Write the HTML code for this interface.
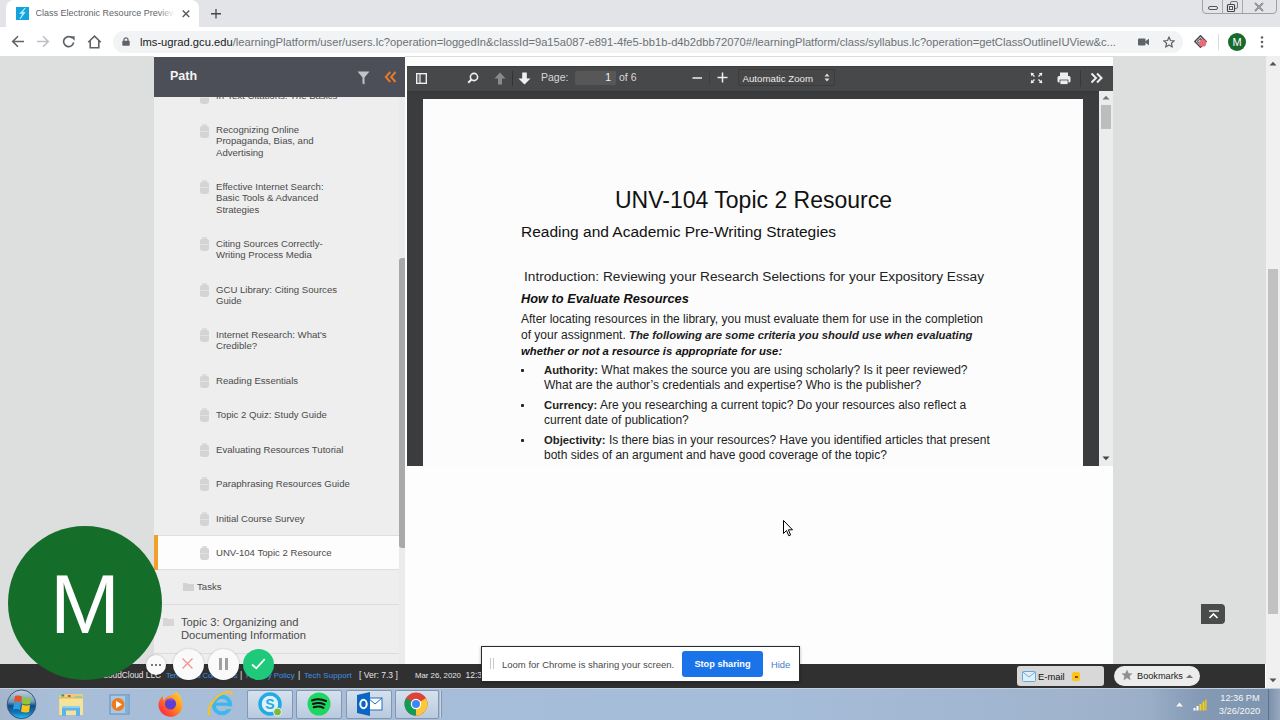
<!DOCTYPE html>
<html><head><meta charset="utf-8">
<style>
*{box-sizing:border-box;margin:0;padding:0}
html,body{width:1280px;height:720px;overflow:hidden;background:#fff;font-family:"Liberation Sans",sans-serif}
.a{position:absolute}
.nw{white-space:nowrap}
#tabbar{left:0;top:0;width:1280px;height:27px;background:#e3e4e8}
#tab{left:6px;top:0;width:193px;height:28px;background:#fff;border-radius:8px 8px 0 0}
#toolbar{left:0;top:27px;width:1280px;height:29px;background:#fff}
#pill{left:113px;top:31px;width:1070px;height:22px;background:#f1f3f4;border-radius:11px}
#url{left:140px;top:35px;font-size:11.2px;color:#202124;line-height:15px}
#url span{color:#6d7175}
#leftgray{left:0;top:56px;width:154px;height:608px;background:#dcdfde}
#pathhdr{left:154px;top:57px;width:251.5px;height:40px;background:#4c4e58}
#pathlist{left:154px;top:97px;width:245px;height:567px;background:#eeeeee;overflow:hidden}
#sbar{left:399px;top:97px;width:7.5px;height:567px;background:#ebebeb}
#sthumb{left:399px;top:258px;width:7.5px;height:290px;background:#a9a9a9;border-radius:3px}
#midwhite{left:405px;top:56px;width:708px;height:608px;background:#fdfdfd}
#pdf{left:406.5px;top:66px;width:706.5px;height:399.5px;background:#3b3c3e}
#pdftb{left:406.5px;top:66px;width:706.5px;height:24.5px;background:#474849;border-top:1px solid #3c3d3e}
#page{left:422.5px;top:99px;width:660.5px;height:366.5px;background:#fcfcfc}
#rightgray{left:1113px;top:56px;width:153px;height:608px;background:#dcdfde}
#oscroll{left:1266px;top:56px;width:14px;height:632px;background:#f0f0f0}
#footer{left:0;top:664px;width:1265px;height:24px;background:#303030}
#taskbar{left:0;top:688px;width:1280px;height:32px;background:linear-gradient(90deg,#a5b6cc 0%,#a7bdd8 4%,#a6bdd9 60%,#9fb3cc 85%,#8ea3bd 100%)}
.item{position:absolute;left:216px;font-size:9.6px;line-height:11.3px;color:#4b4b4b;white-space:nowrap}
.ico{position:absolute;left:200px;width:8.5px;height:12px;margin-top:2px;background:#d4d4d4;border-radius:2px 2px 3px 3px}.ico::before{content:"";position:absolute;left:2px;top:-2px;width:4.5px;height:2px;background:#dcdcdc;border-radius:1px 1px 0 0}.ico::after{content:"";position:absolute;left:0;top:5px;width:8.5px;height:1px;background:#e2e2e2}
.pdft{position:absolute;color:#111;white-space:nowrap}
</style></head><body>
<div id="tabbar" class="a"></div>
<div id="tab" class="a"></div>
<div id="toolbar" class="a"></div>
<div id="pill" class="a"></div>
<div id="url" class="a nw">lms-ugrad.gcu.edu<span>/learningPlatform/user/users.lc?operation=loggedIn&amp;classId=9a15a087-e891-4fe5-bb1b-d4b2dbb72070#/learningPlatform/class/syllabus.lc?operation=getClassOutlineIUView&amp;c...</span></div>

<!-- tab contents -->
<div class="a" style="left:16px;top:7px;width:13px;height:13px;background:#16a2dc"></div>
<svg class="a" style="left:16px;top:7px" width="13" height="13" viewBox="0 0 13 13"><path d="M9.2 1L3.8 6.6L6.8 6.6L4 12L9 5.4L6.2 5.4Z" fill="#c9faff" stroke="#b0f4ff" stroke-width="0.7" stroke-linejoin="round"/></svg>
<div class="a nw" style="left:35.6px;top:7px;font-size:9px;line-height:13px;color:#5f6368;width:150px;overflow:hidden"><span id="tt">Class Electronic Resource</span> Preview</div>
<div class="a" style="left:158px;top:4px;width:22px;height:20px;background:linear-gradient(90deg,rgba(255,255,255,0),#fff 75%)"></div>
<svg class="a" style="left:181.5px;top:10px" width="8" height="7.5" viewBox="0 0 8 7.5"><path d="M0.7 0.5L7.3 7M7.3 0.5L0.7 7" stroke="#555a5e" stroke-width="1.35"/></svg>
<svg class="a" style="left:211px;top:9px" width="10" height="9.5" viewBox="0 0 10 9.5"><path d="M5 0V9.5M0 4.75H10" stroke="#45484b" stroke-width="1.3"/></svg>
<!-- window controls -->
<div class="a" style="left:1202px;top:-3px;width:75px;height:17px;border:1px solid #a0a0a0;border-radius:0 0 4px 4px"></div>
<div class="a" style="left:1222px;top:0;width:1px;height:13px;background:#a8a8a8"></div>
<div class="a" style="left:1242px;top:0;width:1px;height:13px;background:#a8a8a8"></div>
<div class="a" style="left:1208px;top:6px;width:10px;height:4px;border:1px solid #555;border-radius:2px"></div>
<svg class="a" style="left:1226px;top:1px" width="13" height="12" viewBox="0 0 13 12"><rect x="4.5" y="0.5" width="7" height="7" rx="1.5" fill="none" stroke="#777"/><rect x="1.5" y="3.5" width="7" height="7" rx="1" fill="#eee" stroke="#444" stroke-width="1.2"/><rect x="3.5" y="5.5" width="3" height="3" fill="none" stroke="#555"/></svg>
<svg class="a" style="left:1254px;top:2px" width="10" height="10" viewBox="0 0 10 10"><path d="M1 1L9 9M9 1L1 9" stroke="#555" stroke-width="1.6"/><path d="M1 1L9 9M9 1L1 9" stroke="#eee" stroke-width="0.5"/></svg>
<!-- nav icons -->
<svg class="a" style="left:11px;top:35px" width="14" height="13" viewBox="0 0 14 13"><path d="M13 6.5H2M7 1.2L1.7 6.5L7 11.8" stroke="#5f6368" stroke-width="1.6" fill="none"/></svg>
<svg class="a" style="left:36px;top:35px" width="14" height="13" viewBox="0 0 14 13"><path d="M1 6.5H12M7 1.2L12.3 6.5L7 11.8" stroke="#bdc1c6" stroke-width="1.6" fill="none"/></svg>
<svg class="a" style="left:62px;top:35px" width="14" height="13" viewBox="0 0 14 13"><path d="M11.6 7.3A5 5 0 1 1 10 2.9" stroke="#5f6368" stroke-width="1.7" fill="none"/><path d="M8 1.2H12.6V5.8Z" fill="#5f6368"/></svg>
<svg class="a" style="left:87px;top:35px" width="15" height="14" viewBox="0 0 15 14"><path d="M1.2 7.3L7.5 1.2L13.8 7.3M3.2 5.8V12.8H11.8V5.8" stroke="#5f6368" stroke-width="1.6" fill="none"/></svg>
<!-- lock -->
<svg class="a" style="left:122px;top:37px" width="8" height="9" viewBox="0 0 8 9"><rect x="0.3" y="3.8" width="7.4" height="5" rx="0.8" fill="#5f6368"/><path d="M2 4V2.8A2 2 0 0 1 6 2.8V4" stroke="#5f6368" stroke-width="1.2" fill="none"/></svg>
<!-- camera, star -->
<svg class="a" style="left:1138px;top:38px" width="11" height="8" viewBox="0 0 11 8"><rect x="0" y="0.5" width="7.5" height="7" rx="1" fill="#5f6368"/><path d="M7 3.5L11 0.8V7.2L7 4.5Z" fill="#5f6368"/></svg>
<svg class="a" style="left:1163px;top:36px" width="12" height="12" viewBox="0 0 13 13"><path d="M6.5 1L8.1 4.9L12.3 5.2L9.1 7.9L10.1 12L6.5 9.8L2.9 12L3.9 7.9L0.7 5.2L4.9 4.9Z" stroke="#5f6368" stroke-width="1.3" fill="none" stroke-linejoin="round"/></svg>
<!-- loom ext icon -->
<svg class="a" style="left:1194px;top:35px" width="13" height="13" viewBox="0 0 13 13"><path d="M6.5 0.8L12.2 6.5L6.5 12.2L0.8 6.5Z" fill="none" stroke="#4a4a4a" stroke-width="1.5" stroke-linejoin="round"/><path d="M6.5 3.3L9.7 6.5L6.5 9.7L3.3 6.5Z" fill="none" stroke="#666" stroke-width="1.2" stroke-linejoin="round"/><circle cx="8.6" cy="8.2" r="3.6" fill="#ec6a7a"/></svg>
<div class="a" style="left:1218px;top:34px;width:1px;height:16px;background:#dadce0"></div>
<div class="a" style="left:1228px;top:33px;width:18px;height:18px;border-radius:50%;background:#176a2b;color:#fff;font-size:11px;line-height:18px;text-align:center">M</div>
<svg class="a" style="left:1260px;top:35px" width="4" height="14" viewBox="0 0 4 14"><circle cx="2" cy="2.5" r="1.3" fill="#5f6368"/><circle cx="2" cy="7" r="1.3" fill="#5f6368"/><circle cx="2" cy="11.5" r="1.3" fill="#5f6368"/></svg>

<div id="leftgray" class="a"></div>
<div id="pathhdr" class="a"></div>
<div id="pathlist" class="a"></div>

<!-- path header -->
<!-- list items -->
<div class="ico" style="top:90px"></div><div class="item" style="top:90px">In-Text Citations: The Basics</div>
<div class="a" style="left:154px;top:57px;width:251.5px;height:40px;background:#4c4e58"></div>
<div class="a nw" style="left:170px;top:69px;font-size:12.5px;font-weight:bold;color:#f4f4f4;line-height:14px">Path</div>
<svg class="a" style="left:356.5px;top:70.5px" width="13" height="14" viewBox="0 0 13 14"><path d="M0.5 0.5H12.5L7.5 6.5V13.5L5.5 12.5V6.5Z" fill="#c2c3c7"/></svg>
<svg class="a" style="left:383.5px;top:71px" width="13" height="12" viewBox="0 0 13 12"><path d="M6.2 1L1.8 6L6.2 11M11.5 1L7.1 6L11.5 11" stroke="#ea7a26" stroke-width="1.9" fill="none"/></svg>
<div class="ico" style="top:124px"></div><div class="item" style="top:124px">Recognizing Online<br>Propaganda, Bias, and<br>Advertising</div>
<div class="ico" style="top:180px"></div><div class="item" style="top:181px">Effective Internet Search:<br>Basic Tools &amp; Advanced<br>Strategies</div>
<div class="ico" style="top:237px"></div><div class="item" style="top:238px">Citing Sources Correctly-<br>Writing Process Media</div>
<div class="ico" style="top:283px"></div><div class="item" style="top:284px">GCU Library: Citing Sources<br>Guide</div>
<div class="ico" style="top:328px"></div><div class="item" style="top:329px">Internet Research: What's<br>Credible?</div>
<div class="ico" style="top:374px"></div><div class="item" style="top:375px">Reading Essentials</div>
<div class="ico" style="top:408px"></div><div class="item" style="top:409px">Topic 2 Quiz: Study Guide</div>
<div class="ico" style="top:443px"></div><div class="item" style="top:444px">Evaluating Resources Tutorial</div>
<div class="ico" style="top:477px"></div><div class="item" style="top:478px">Paraphrasing Resources Guide</div>
<div class="ico" style="top:512px"></div><div class="item" style="top:513px">Initial Course Survey</div>
<div class="a" style="left:154px;top:535px;width:245px;height:35px;background:#fdfdfd;border-top:1px solid #dedede;border-bottom:1px solid #dedede"></div>
<div class="a" style="left:154px;top:535px;width:4px;height:35px;background:#f0a02a"></div>
<div class="ico" style="top:546px"></div><div class="item" style="top:547px">UNV-104 Topic 2 Resource</div>
<svg class="a" style="left:183px;top:582px" width="11" height="9" viewBox="0 0 11 9"><path d="M0 1H4L5 2H11V9H0Z" fill="#d2d2d2"/></svg>
<div class="item" style="left:197px;top:581px">Tasks</div>
<div class="a" style="left:154px;top:604px;width:245px;height:1px;background:#dcdcdc"></div>
<svg class="a" style="left:163px;top:617px" width="11" height="9" viewBox="0 0 11 9"><path d="M0 1H4L5 2H11V9H0Z" fill="#d6d6d6"/></svg>
<div class="item" style="left:181px;top:616px;font-size:11.2px;line-height:13px">Topic 3: Organizing and<br>Documenting Information</div>
<div class="a" style="left:154px;top:653px;width:245px;height:1px;background:#dcdcdc"></div>
<div id="sbar" class="a"></div>
<div id="sthumb" class="a"></div>
<div id="midwhite" class="a"></div>
<div id="pdf" class="a"></div>
<div id="pdftb" class="a"></div>

<!-- pdf toolbar -->
<div class="a" style="left:406.5px;top:91px;width:706.5px;height:3px;background:linear-gradient(#353638,#3b3c3e)"></div>
<svg class="a" style="left:416px;top:73px" width="11" height="11" viewBox="0 0 11 11"><rect x="0.7" y="0.7" width="9.6" height="9.6" fill="none" stroke="#eee" stroke-width="1.4"/><path d="M4 1V10" stroke="#eee" stroke-width="1.2"/><path d="M2 2.5V8.5" stroke="#999" stroke-width="1"/></svg>
<svg class="a" style="left:467px;top:72px" width="12" height="12" viewBox="0 0 12 12"><circle cx="7" cy="5" r="3.6" fill="none" stroke="#eee" stroke-width="1.6"/><path d="M4.5 7.5L1.2 10.8" stroke="#eee" stroke-width="2"/></svg>
<svg class="a" style="left:494px;top:72px" width="12" height="13" viewBox="0 0 12 13"><path d="M6 0.5L11.5 6.5H8V12.5H4V6.5H0.5Z" fill="#8a8a8a"/></svg>
<div class="a" style="left:512px;top:71px;width:1px;height:15px;background:#333"></div>
<svg class="a" style="left:518px;top:72px" width="13" height="13" viewBox="0 0 13 13"><path d="M6.5 12.5L12.5 6.5H8.8V0.5H4.2V6.5H0.5Z" fill="#f0f0f0"/></svg>
<div class="a nw" style="left:541px;top:71px;font-size:10.5px;line-height:13px;color:#d8d8d8">Page:</div>
<div class="a" style="left:575px;top:70px;width:41px;height:15px;background:#575757;border-radius:2px;box-shadow:inset 0 1px 0 #4a4a4a"></div>
<div class="a nw" style="left:575px;top:71px;width:36px;text-align:right;font-size:10.5px;line-height:13px;color:#f2f2f2">1</div>
<div class="a nw" style="left:619px;top:71px;font-size:10.5px;line-height:13px;color:#d8d8d8">of 6</div>
<svg class="a" style="left:692px;top:73px" width="11" height="10" viewBox="0 0 11 10"><path d="M0.5 5H10" stroke="#eee" stroke-width="1.5"/></svg>
<div class="a" style="left:709px;top:70px;width:1px;height:15px;background:#404040"></div>
<svg class="a" style="left:717px;top:72px" width="11" height="11" viewBox="0 0 11 11"><path d="M0.5 5.5H10.5M5.5 0.5V10.5" stroke="#eee" stroke-width="1.5"/></svg>
<div class="a" style="left:738px;top:69px;width:97px;height:17px;background:#474747;border:1px solid #3c3c3c;border-radius:2px"></div>
<div class="a nw" style="left:742.5px;top:71.5px;font-size:9.7px;line-height:13px;color:#ececec">Automatic Zoom</div>
<svg class="a" style="left:824px;top:73px" width="6" height="9" viewBox="0 0 6 9"><path d="M0.5 3.5L3 0.5L5.5 3.5ZM0.5 5.5L3 8.5L5.5 5.5Z" fill="#ddd"/></svg>
<svg class="a" style="left:1030px;top:72px" width="13" height="12" viewBox="0 0 13 12"><path d="M1 1L4.5 4.5M12 1L8.5 4.5M1 11L4.5 7.5M12 11L8.5 7.5" stroke="#eee" stroke-width="1.4"/><path d="M1 1H4.2L1 4.2ZM12 1H8.8L12 4.2ZM1 11H4.2L1 7.8ZM12 11H8.8L12 7.8Z" fill="#eee"/></svg>
<svg class="a" style="left:1057px;top:72px" width="14" height="13" viewBox="0 0 14 13"><rect x="3" y="0.5" width="8" height="4" fill="#eee"/><rect x="0.5" y="4" width="13" height="6.5" rx="1.5" fill="#eee"/><rect x="3" y="8" width="8" height="4.5" fill="#eee" stroke="#484848" stroke-width="0.8"/></svg>
<div class="a" style="left:1080px;top:70px;width:1px;height:17px;background:#383838"></div>
<svg class="a" style="left:1090px;top:72px" width="13" height="12" viewBox="0 0 13 12"><path d="M1.5 1.5L6 6L1.5 10.5M7 1.5L11.5 6L7 10.5" stroke="#eee" stroke-width="2" fill="none"/></svg>
<!-- inner scrollbar -->
<div class="a" style="left:1099px;top:91px;width:14px;height:374.5px;background:#ececec"></div>
<div class="a" style="left:1101px;top:105px;width:10px;height:24px;background:#bdbdbd"></div>
<svg class="a" style="left:1102px;top:95px" width="8" height="5" viewBox="0 0 8 5"><path d="M0.5 4.5L4 0.8L7.5 4.5Z" fill="#777"/></svg>
<svg class="a" style="left:1102px;top:456px" width="8" height="5" viewBox="0 0 8 5"><path d="M0.5 0.5L4 4.2L7.5 0.5Z" fill="#444"/></svg>
<div id="page" class="a"></div>

<!-- pdf content -->
<div class="pdft" id="t1" style="left:615px;top:187px;font-size:23px;line-height:26px;color:#111">UNV-104 Topic 2 Resource</div>
<div class="pdft" id="t2" style="left:521px;top:223px;font-size:15.5px;line-height:18px;color:#111">Reading and Academic Pre-Writing Strategies</div>
<div class="pdft" id="t3" style="left:524px;top:268.9px;font-size:13.66px;line-height:16px;color:#222">Introduction: Reviewing your Research Selections for your Expository Essay</div>
<div class="pdft" id="t4" style="left:521px;top:291.3px;font-size:12.8px;line-height:16px;color:#111;font-weight:bold;font-style:italic">How to Evaluate Resources</div>
<div class="pdft" style="left:521px;top:312.8px;font-size:12px;line-height:12px;color:#222"><span id="l1">After locating resources in the library, you must evaluate them for use in the completion</span></div>
<div class="pdft" style="left:521px;top:328.8px;font-size:12px;line-height:12px;color:#222"><span id="l2a">of your assignment.</span> <b><i id="l2b" style="font-size:11.3px">The following are some criteria you should use when evaluating</i></b></div>
<div class="pdft" style="left:521px;top:345.1px;font-size:11.3px;line-height:12px;color:#111"><b><i id="l3">whether or not a resource is appropriate for use:</i></b></div>
<div class="a" style="left:521px;top:369px;width:3px;height:3px;background:#222;border-radius:1px"></div>
<div class="a" style="left:521px;top:404px;width:3px;height:3px;background:#222;border-radius:1px"></div>
<div class="a" style="left:521px;top:439px;width:3px;height:3px;background:#222;border-radius:1px"></div>
<div class="pdft" style="left:544px;top:363.7px;font-size:12px;line-height:12px;color:#222"><b id="a1" style="font-size:11.3px">Authority:</b> <span id="a2">What makes the source you are using scholarly? Is it peer reviewed?</span></div>
<div class="pdft" style="left:544px;top:379px;font-size:12px;line-height:12px;color:#222"><span id="a3">What are the author&#8217;s credentials and expertise? Who is the publisher?</span></div>
<div class="pdft" style="left:544px;top:398.7px;font-size:12px;line-height:12px;color:#222"><b id="c1" style="font-size:11.3px">Currency:</b> <span id="c2">Are you researching a current topic? Do your resources also reflect a</span></div>
<div class="pdft" style="left:544px;top:414px;font-size:12px;line-height:12px;color:#222"><span id="c3">current date of publication?</span></div>
<div class="pdft" style="left:544px;top:433.7px;font-size:12px;line-height:12px;color:#222"><b id="o1" style="font-size:11.3px">Objectivity:</b> <span id="o2">Is there bias in your resources? Have you identified articles that present</span></div>
<div class="pdft" style="left:544px;top:448.7px;font-size:12px;line-height:12px;color:#222"><span id="o3">both sides of an argument and have good coverage of the topic?</span></div>
<div id="rightgray" class="a"></div>
<div class="a" style="left:405px;top:56px;width:708px;height:1px;background:#d9dbdc"></div>
<div id="oscroll" class="a"></div>
<div id="footer" class="a"></div>
<div id="taskbar" class="a"></div>

<!-- outer scrollbar -->
<div class="a" style="left:1268px;top:269px;width:10px;height:344.5px;background:#c1c1c1"></div>
<svg class="a" style="left:1269px;top:61px" width="8" height="5" viewBox="0 0 8 5"><path d="M0.5 4.5L4 0.8L7.5 4.5Z" fill="#555"/></svg>
<svg class="a" style="left:1269px;top:678px" width="8" height="5" viewBox="0 0 8 5"><path d="M0.5 0.5L4 4.2L7.5 0.5Z" fill="#555"/></svg>
<!-- scroll top btn -->
<div class="a" style="left:1201px;top:604px;width:24px;height:20px;background:#4a4b4b;border-radius:0 4px 4px 0"></div>
<svg class="a" style="left:1207.5px;top:609.5px" width="12" height="10" viewBox="0 0 12 10"><path d="M1 1H11" stroke="#fff" stroke-width="1.3"/><path d="M1.5 8L5.5 4L9.5 8" stroke="#fff" stroke-width="1.7" fill="none"/></svg>
<!-- footer content -->
<div class="a nw" style="left:40px;top:670px;font-size:8.3px;line-height:11px;color:#e6e6e6;width:121px;text-align:right" id="f1">&copy; 2020 LoudCloud LLC</div>
<div class="a nw" style="left:166px;top:670px;font-size:7.6px;letter-spacing:-0.1px;line-height:11px;color:#3e93e6" id="f2">Terms and Conditions</div>
<div class="a nw" style="left:240px;top:670px;font-size:8.6px;line-height:11px;color:#e6e6e6">|</div>
<div class="a nw" style="left:246px;top:670px;font-size:7.8px;line-height:11px;color:#3e93e6" id="f2b">Privacy Policy</div>
<div class="a nw" style="left:298px;top:670px;font-size:8.6px;line-height:11px;color:#e6e6e6">|</div>
<div class="a nw" style="left:304px;top:670px;font-size:7.9px;line-height:11px;color:#3e93e6;letter-spacing:0.1px" id="f3">Tech Support</div>
<div class="a nw" style="left:359px;top:670px;font-size:8.5px;line-height:11px;color:#e6e6e6" id="f4">[ Ver: 7.3 ]</div>
<div class="a nw" style="left:415px;top:670px;font-size:7.8px;line-height:11px;color:#e6e6e6" id="f5">Mar 26, 2020</div>
<div class="a nw" style="left:465.5px;top:670px;font-size:8.5px;line-height:11px;color:#e6e6e6">12:36 PM</div>
<div class="a" style="left:1017px;top:666px;width:87px;height:20px;background:#d8d8d8;border-radius:3px"></div>
<svg class="a" style="left:1022px;top:670px" width="14" height="12" viewBox="0 0 14 12"><rect x="0.5" y="1.5" width="13" height="10" rx="1" fill="#dff0fb" stroke="#6aa8d8"/><path d="M0.8 2L7 7L13.2 2" stroke="#6aa8d8" fill="none"/></svg>
<div class="a nw" style="left:1038px;top:670px;font-size:9.4px;line-height:13px;color:#111" id="em">E-mail</div>
<div class="a" style="left:1072px;top:672px;width:8px;height:9px;background:#ffc41a;border-radius:2px"></div>
<div class="a" style="left:1075px;top:676px;width:2.5px;height:1.5px;background:#8a4a00"></div>
<div class="a" style="left:1114px;top:666px;width:86px;height:20px;background:#ececec;border-radius:10px"></div>
<svg class="a" style="left:1121px;top:669px" width="12" height="12" viewBox="0 0 12 12"><path d="M6 0.5L7.6 4.2L11.6 4.5L8.6 7.1L9.5 11.2L6 9.1L2.5 11.2L3.4 7.1L0.4 4.5L4.4 4.2Z" fill="#8f8f8f"/></svg>
<div class="a nw" style="left:1137px;top:670px;font-size:9.2px;line-height:13px;color:#222" id="bm">Bookmarks</div>
<svg class="a" style="left:1186px;top:674px" width="7" height="4" viewBox="0 0 7 4"><path d="M0 4L3.5 0.5L7 4Z" fill="#777"/></svg>
<!-- taskbar -->
<div class="a" style="left:1150px;top:688px;width:130px;height:32px;background:linear-gradient(90deg,rgba(140,160,185,0),#8499b4 40%,#7e93ae)"></div>
<div class="a" style="left:0;top:688px;width:1280px;height:1px;background:#c3cfdc"></div>
<svg class="a" style="left:6px;top:689px" width="31" height="31" viewBox="0 0 31 31"><defs><linearGradient id="og" x1="0" y1="0" x2="0" y2="1"><stop offset="0" stop-color="#c9d6e0"/><stop offset="0.42" stop-color="#6f98b8"/><stop offset="0.55" stop-color="#0c4c88"/><stop offset="0.8" stop-color="#1478b8"/><stop offset="1" stop-color="#22c8f4"/></linearGradient></defs><circle cx="15.5" cy="15.3" r="14.3" fill="url(#og)" stroke="#35577a" stroke-width="1"/><path d="M9 7Q12 6 16 7.5L15 13.5Q12 12 8 13Z" fill="#e8502a"/><path d="M17 8Q21 9.5 25 8.5L24 15Q20 16 16 14.5Z" fill="#8cc63e"/><path d="M8 14Q12 13 15 14.5L14 21Q11 19.5 7 20.5Z" fill="#2a9ee0"/><path d="M16 15.5Q20 17 24 16L23 23Q19 24 15 22.5Z" fill="#fcc419"/></svg>
<!-- explorer -->
<svg class="a" style="left:58px;top:693px" width="26" height="24" viewBox="0 0 26 24"><path d="M1 2.5H6L7.5 1H25V22H1Z" fill="#e9cf7a"/><rect x="1.5" y="5" width="23.5" height="17" fill="#f6e39a"/><rect x="1" y="4.3" width="24" height="1.2" fill="#d8b65a"/><rect x="17" y="3" width="7" height="2" fill="#9fc9a0"/><rect x="3.5" y="1.5" width="2.5" height="2" fill="#3a9a3a"/><rect x="10" y="2" width="2.5" height="2" fill="#d05040"/><path d="M4 13H22V23H18V17.5H8V23H4Z" fill="#5fb3e6"/><path d="M4 13H22V15H4Z" fill="#8fd0f2"/></svg>
<!-- media player -->
<svg class="a" style="left:109px;top:694px" width="22" height="21" viewBox="0 0 22 21"><rect x="1" y="1" width="19" height="19" fill="#a8c8e4" stroke="#5b8fc0"/><rect x="16" y="1" width="3" height="19" fill="#86aed3"/><circle cx="9" cy="10.5" r="6.5" fill="#f07b1a"/><path d="M7 6.8V14.2L13 10.5Z" fill="#fff"/></svg>
<!-- firefox -->
<svg class="a" style="left:157px;top:690px" width="27" height="27" viewBox="0 0 27 27"><defs><linearGradient id="ffg" x1="1" y1="0" x2="0" y2="1"><stop offset="0" stop-color="#ffe03a"/><stop offset="0.45" stop-color="#ff8a1e"/><stop offset="0.8" stop-color="#ff3a3a"/><stop offset="1" stop-color="#f0206a"/></linearGradient></defs><path d="M19 1.5Q25 6 25.5 14A12 12 0 1 1 2 11.5Q3 8 6 6Q5.5 9 7 10.5Q9 6 14 5.5Q17 5 19 1.5Z" fill="url(#ffg)"/><circle cx="13.5" cy="14" r="5.6" fill="#5d3fd3"/><path d="M9 10Q13 7.5 17 9L15 11Q12 10 9 10Z" fill="#8a4be0"/></svg>
<!-- ie -->
<svg class="a" style="left:207px;top:690px" width="27" height="27" viewBox="0 0 27 27"><circle cx="15" cy="15" r="8.3" fill="none" stroke="#3cb8ee" stroke-width="4"/><path d="M8 14.2H23" stroke="#3cb8ee" stroke-width="3.2"/><rect x="17.5" y="16.4" width="8" height="2.8" fill="#a9bdd6"/><path d="M3.2 25Q-0.5 21 5 13Q11 4 20 2Q25.5 1 24.5 5" stroke="#f2c232" stroke-width="2.3" fill="none"/></svg>
<!-- running app buttons -->
<div class="a" style="left:247px;top:690px;width:46px;height:29px;background:linear-gradient(#d6e1ee,#b9cade);border:1px solid #8397b0;border-radius:2px"></div>
<div class="a" style="left:296px;top:690px;width:46px;height:29px;background:linear-gradient(#d6e1ee,#b9cade);border:1px solid #8397b0;border-radius:2px"></div>
<div class="a" style="left:346px;top:690px;width:46px;height:29px;background:linear-gradient(#d6e1ee,#b9cade);border:1px solid #8397b0;border-radius:2px"></div>
<div class="a" style="left:395px;top:690px;width:44px;height:29px;background:linear-gradient(#d6e1ee,#b9cade);border:1px solid #8397b0;border-radius:2px"></div>
<div class="a" style="left:440px;top:691px;width:2px;height:27px;background:#c6d4e4;border-right:1px solid #8397b0"></div>
<!-- skype -->
<svg class="a" style="left:257px;top:692px" width="26" height="25" viewBox="0 0 26 25"><circle cx="13" cy="12" r="10" fill="none" stroke="#22aae6" stroke-width="3.5"/><circle cx="13" cy="12" r="8" fill="#ddf2fb"/><text x="13" y="17" text-anchor="middle" font-family="Liberation Sans" font-weight="bold" font-size="14" fill="#22aae6">S</text><circle cx="20.5" cy="20" r="4" fill="#7bb93a" stroke="#eee" stroke-width="1"/></svg>
<!-- spotify -->
<svg class="a" style="left:307px;top:692px" width="24" height="24" viewBox="0 0 24 24"><circle cx="12" cy="12" r="11.5" fill="#1ed760"/><path d="M5 8.5Q12 6 19 9M6 12Q12 10 17.5 12.5M6.8 15.3Q12 13.5 16.5 15.8" stroke="#111" stroke-width="2" fill="none" stroke-linecap="round"/></svg>
<!-- outlook -->
<svg class="a" style="left:356px;top:692px" width="27" height="24" viewBox="0 0 27 24"><rect x="12" y="6" width="14" height="12" fill="#fff" stroke="#1f6fc0"/><path d="M12 6L19 12L26 6" stroke="#1f6fc0" fill="none"/><path d="M1 3L14 0V24L1 21Z" fill="#0a66c2"/><ellipse cx="7.5" cy="12" rx="3.2" ry="4.2" fill="none" stroke="#fff" stroke-width="2"/></svg>
<!-- chrome -->
<svg class="a" style="left:404px;top:692px" width="24" height="24" viewBox="0 0 24 24"><circle cx="12" cy="12" r="11.5" fill="#db4437"/><path d="M12 12L22 6.3A11.5 11.5 0 0 1 12 23.5Z" fill="#fcc934"/><path d="M12 12L12 23.5A11.5 11.5 0 0 1 2 6.3Z" fill="#0f9d58"/><circle cx="12" cy="12" r="5.2" fill="#fff"/><circle cx="12" cy="12" r="4" fill="#4285f4"/></svg>
<!-- tray -->
<svg class="a" style="left:1176px;top:702px" width="7" height="5" viewBox="0 0 7 5"><path d="M0 4.5L3.5 0.5L7 4.5Z" fill="#f4f4f4"/></svg>
<svg class="a" style="left:1193px;top:699px" width="14" height="12" viewBox="0 0 14 12"><rect x="0.5" y="9" width="2" height="2.5" fill="#fff"/><rect x="3.5" y="7" width="2" height="4.5" fill="#fff"/><rect x="6.5" y="5" width="2" height="6.5" fill="#f5d020"/><rect x="9.5" y="2.5" width="2" height="9" fill="#f5d020"/><rect x="12" y="0.5" width="1.6" height="11" fill="#e8c010"/></svg>
<div class="a nw" style="left:1219px;top:692px;font-size:9.2px;line-height:13px;color:#f6f6f6;text-align:center;width:42px"><span id="ck1">12:36 PM</span></div>
<div class="a nw" style="left:1217px;top:705px;font-size:9.35px;line-height:13px;color:#f6f6f6;text-align:center;width:45px"><span id="ck2">3/26/2020</span></div>
<div class="a" style="left:1268px;top:689px;width:12px;height:31px;background:linear-gradient(90deg,#7e91aa,#95a8c0);border-left:1px solid #5f7390"></div>
<!-- M circle -->
<div class="a" style="left:8px;top:526px;width:154px;height:154px;border-radius:50%;background:#146d29"></div>
<div class="a nw" style="left:8px;top:560px;width:154px;text-align:center;font-size:84px;line-height:88px;color:#fff">M</div>
<!-- loom controls -->
<div class="a" style="left:146px;top:655px;width:20px;height:20px;border-radius:50%;background:#fafafa;box-shadow:0 0 2px rgba(0,0,0,.25)"></div>
<div class="a" style="left:151px;top:664px;width:2px;height:2px;background:#777"></div>
<div class="a" style="left:155px;top:664px;width:2px;height:2px;background:#777"></div>
<div class="a" style="left:159px;top:664px;width:2px;height:2px;background:#777"></div>
<div class="a" style="left:172.5px;top:649px;width:31px;height:31px;border-radius:50%;background:#fafafa;box-shadow:0 0 2px rgba(0,0,0,.25)"></div>
<svg class="a" style="left:182px;top:658px" width="11" height="11" viewBox="0 0 11 11"><path d="M0.5 0.5L10.5 10.5M10.5 0.5L0.5 10.5" stroke="#f29090" stroke-width="1.3"/></svg>
<div class="a" style="left:207.5px;top:649px;width:31.5px;height:31px;border-radius:50%;background:#fafafa;box-shadow:0 0 2px rgba(0,0,0,.25)"></div>
<div class="a" style="left:219px;top:658px;width:2.5px;height:12px;background:#a0a0a0"></div>
<div class="a" style="left:225px;top:658px;width:2.5px;height:12px;background:#a0a0a0"></div>
<div class="a" style="left:242.5px;top:648.5px;width:31.5px;height:31.5px;border-radius:50%;background:#1ec97a"></div>
<svg class="a" style="left:251px;top:658px" width="15" height="12" viewBox="0 0 15 12"><path d="M1 6.5L5.3 10.3L13.7 1.2" stroke="#fff" stroke-width="1.8" fill="none"/></svg>
<!-- loom bar -->
<div class="a" style="left:481px;top:646px;width:319px;height:36px;background:#fff;border:1px solid #2a2a2a;box-shadow:0 1px 3px rgba(0,0,0,.3)"></div>
<div class="a" style="left:490px;top:658px;width:1px;height:11px;background:#c8c8c8"></div>
<div class="a" style="left:493px;top:658px;width:1px;height:11px;background:#c8c8c8"></div>
<div class="a nw" id="lm" style="left:502px;top:658px;font-size:9.5px;line-height:13px;color:#4a4a4a">Loom for Chrome is sharing your screen.</div>
<div class="a" style="left:682px;top:651px;width:81px;height:26px;background:#1a73e8;border-radius:3px"></div>
<div class="a nw" style="left:682px;top:657px;width:81px;text-align:center;font-size:9.2px;line-height:13px;font-weight:bold;color:#fff;padding-top:1px"><span id="ss">Stop sharing</span></div>
<div class="a nw" style="left:771px;top:658px;font-size:9.4px;line-height:13px;color:#4a78cc" id="hd">Hide</div>
<!-- cursor -->
<svg class="a" style="left:783px;top:520px" width="10" height="17" viewBox="0 0 10 17"><path d="M0.5 0.5V13.5L3.5 10.5L5.8 15.8L7.6 15L5.4 9.8H9.5Z" fill="#fff" stroke="#000" stroke-width="1"/></svg>
</body></html>
